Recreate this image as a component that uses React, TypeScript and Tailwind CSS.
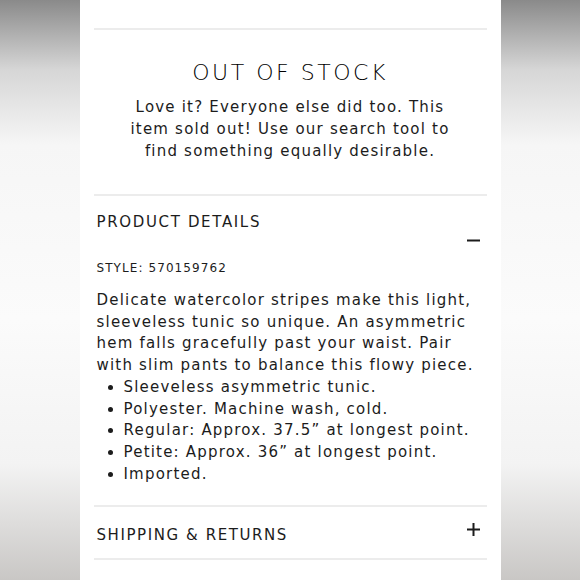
const bullets = [
  'Sleeveless asymmetric tunic.',
  'Polyester. Machine wash, cold.',
  'Regular: Approx. 37.5” at longest point.',
  'Petite: Approx. 36” at longest point.',
  'Imported.',
];

function PlusMinus({ open }: { open: boolean }) {
  return (
    <svg width="13" height="13" viewBox="0 0 13 13" className="shrink-0">
      <rect x="0" y="5.5" width="13" height="2" fill="#1c1c1c" />
      {!open && <rect x="5.5" y="0" width="2" height="13" fill="#1c1c1c" />}
    </svg>
  );
}

export default function App() {
  return (
    <div className="w-[580px] h-[580px] overflow-hidden flex justify-center bg-[linear-gradient(to_bottom,#8a8a8a_0%,#d6d6d6_12%,#f6f6f6_25%,#fbfbfb_55%,#f3f3f3_80%,#c9c7c5_100%)] font-['DejaVu_Sans',sans-serif] text-[#1c1c1c]">
      <div className="w-[421px] h-full bg-white px-[14px] pt-[28px]">
        <div className="h-[2px] bg-[#ececec]" />

        {/* out of stock */}
        <div className="text-center pt-[29px] pb-[32px]">
          <div className="text-[22px] leading-[28px] font-extralight tracking-[0.115em] text-black">OUT OF STOCK</div>
          <p className="mt-[9px] text-[15px] leading-[22px] tracking-[0.08em] px-[28px]">
            Love it? Everyone else did too. This item sold out! Use our search tool to find something equally desirable.
          </p>
        </div>

        <div className="h-[2px] bg-[#ececec]" />

        {/* product details */}
        <div className="px-[3px] pt-[15px] pb-[20px]">
          <div className="flex justify-between">
            <div className="text-[15px] leading-[22px] tracking-[0.11em]">PRODUCT DETAILS</div>
            <div className="mt-[23px] mr-[4px]">
              <PlusMinus open />
            </div>
          </div>
          <div className="mt-[11px] text-[12px] leading-[20px] tracking-[0.09em]">STYLE: 570159762</div>
          <div className="mt-[12px] text-[15px] leading-[21.7px] tracking-[0.08em]">
            <p>
              Delicate watercolor stripes make this light, sleeveless tunic so unique. An asymmetric hem falls gracefully past your waist. Pair with slim pants to balance this flowy piece.
            </p>
            <ul className="list-disc pl-[27px]">
              {bullets.map(b => (
                <li key={b}>{b}</li>
              ))}
            </ul>
          </div>
        </div>

        <div className="h-[2px] bg-[#ececec]" />

        {/* shipping */}
        <div className="px-[3px] pt-[17px] pb-[12px] flex justify-between">
          <div className="text-[15px] leading-[22px] tracking-[0.105em]">SHIPPING &amp; RETURNS</div>
          <div className="mt-[-1px] mr-[4px]">
            <PlusMinus open={false} />
          </div>
        </div>

        <div className="h-[2px] bg-[#ececec]" />
      </div>
    </div>
  );
}
